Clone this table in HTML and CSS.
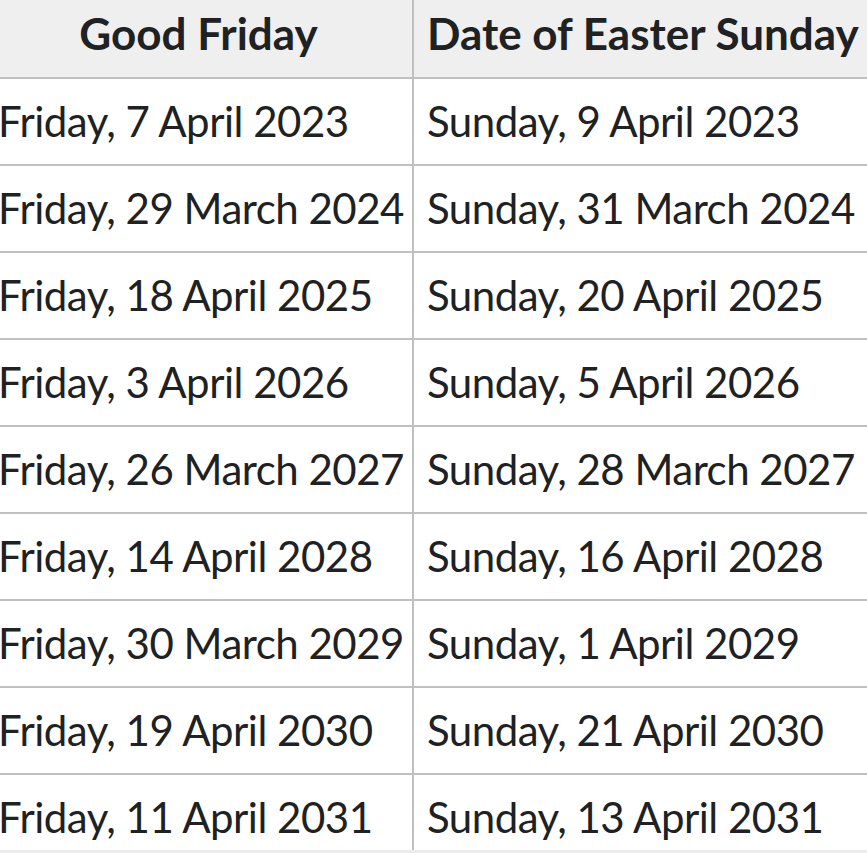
FILE: index.html
```html
<!DOCTYPE html>
<html lang="en">
<head>
<meta charset="utf-8">
<title>Easter dates</title>
<link rel="stylesheet" href="styles.css">
</head>
<body>
<div class="viewport">
  <table class="easter">
    <colgroup><col class="c1"><col class="c2"></colgroup>
    <thead>
      <tr><th>Good Friday</th><th>Date of Easter Sunday</th></tr>
    </thead>
    <tbody>
      <tr><td>Friday, 7 April 2023</td><td>Sunday, 9 April 2023</td></tr>
      <tr><td>Friday, 29 March 2024</td><td>Sunday, 31 March 2024</td></tr>
      <tr><td>Friday, 18 April 2025</td><td>Sunday, 20 April 2025</td></tr>
      <tr><td>Friday, 3 April 2026</td><td>Sunday, 5 April 2026</td></tr>
      <tr><td>Friday, 26 March 2027</td><td>Sunday, 28 March 2027</td></tr>
      <tr><td>Friday, 14 April 2028</td><td>Sunday, 16 April 2028</td></tr>
      <tr><td>Friday, 30 March 2029</td><td>Sunday, 1 April 2029</td></tr>
      <tr><td>Friday, 19 April 2030</td><td>Sunday, 21 April 2030</td></tr>
      <tr><td>Friday, 11 April 2031</td><td>Sunday, 13 April 2031</td></tr>
    </tbody>
  </table>
</div>
</body>
</html>
```

FILE: styles.css
```css
html {
  background: #ececec;
}
body {
  margin: 0;
  overflow: hidden;
  font-family: Lato, "Liberation Sans", sans-serif;
  color: #202122;
}
.viewport {
  height: 850px;
  overflow: hidden;
  background: #fff;
}
.easter {
  table-layout: fixed;
  border-collapse: separate;
  border-spacing: 0;
  width: 888px;
  margin: -8px 0 0 -15px;
  font-size: 42px;
  letter-spacing: -0.5px;
  background: #fff;
}
.c1 { width: 429px; }
.c2 { width: 459px; }
.easter th,
.easter td {
  box-sizing: border-box;
  padding: 16px 13px;
  line-height: 53px;
  border-right: 2px solid #c0c0c0;
  border-bottom: 2px solid #c0c0c0;
  white-space: nowrap;
  text-align: left;
  font-weight: 400;
}
.easter th {
  padding: 15px 13px 17px;
  background: #efefef;
  font-size: 44px;
  letter-spacing: 0;
  font-weight: 700;
  text-align: center;
}
```
